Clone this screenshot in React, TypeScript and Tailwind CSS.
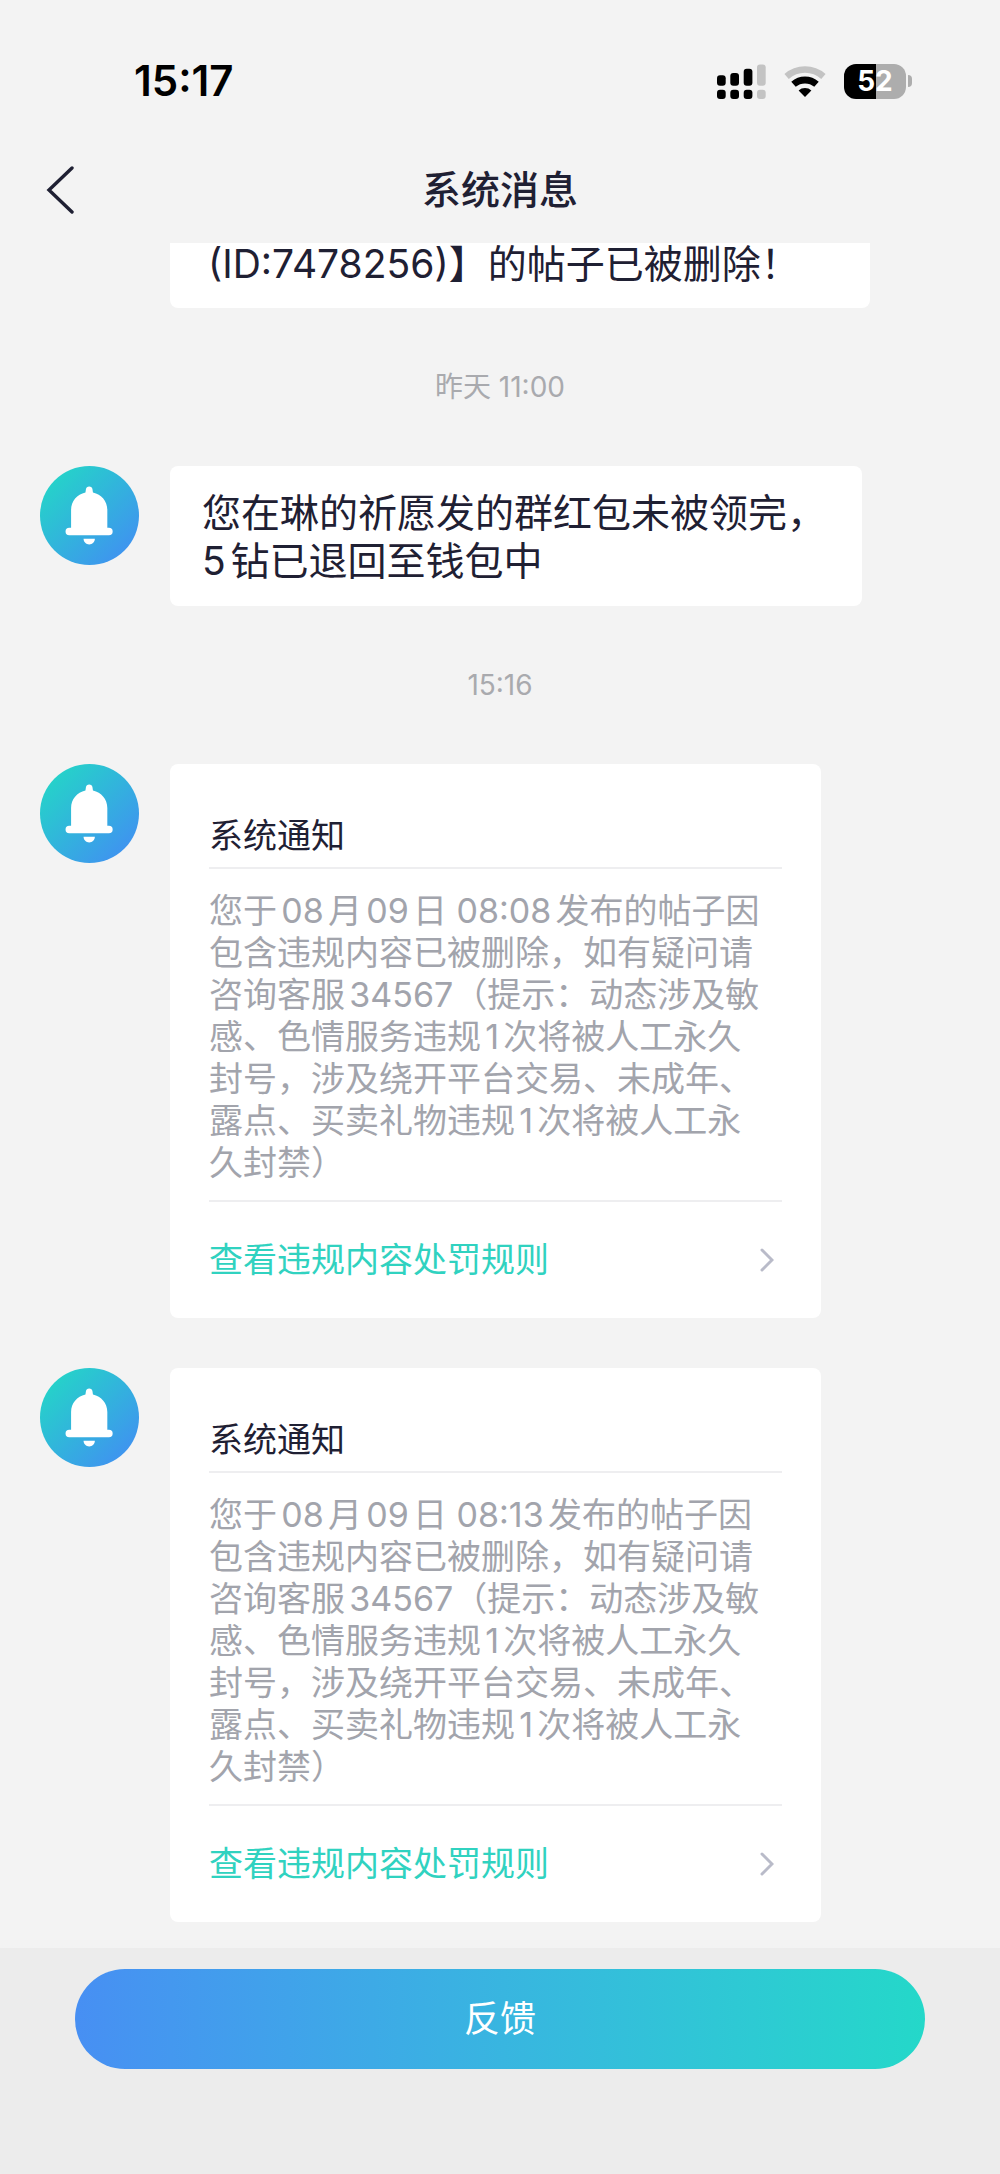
import React from "react";

type Notice = {
  id: number;
  content: string;
};

const notices: Notice[] = [
  {
    id: 1,
    content:
      "您于08月09日 08:08发布的帖子因包含违规内容已被删除，如有疑问请咨询客服34567（提示：动态涉及敏感、色情服务违规1次将被人工永久封号，涉及绕开平台交易、未成年、露点、买卖礼物违规1次将被人工永久封禁）",
  },
  {
    id: 2,
    content:
      "您于08月09日 08:13发布的帖子因包含违规内容已被删除，如有疑问请咨询客服34567（提示：动态涉及敏感、色情服务违规1次将被人工永久封号，涉及绕开平台交易、未成年、露点、买卖礼物违规1次将被人工永久封禁）",
  },
];

function SignalIcon() {
  return (
    <svg width="49" height="35" viewBox="0 0 49 35" aria-hidden="true">
      <g fill="#000">
        <rect x="0" y="11.3" width="8.7" height="10.4" rx="3" />
        <rect x="13.3" y="9" width="8.7" height="12.7" rx="3" />
        <rect x="26.7" y="4.7" width="8.7" height="17" rx="3" />
        <rect x="0" y="25.8" width="8.7" height="9.2" rx="3" />
        <rect x="13.3" y="25.8" width="8.7" height="9.2" rx="3" />
        <rect x="26.7" y="25.8" width="8.7" height="9.2" rx="3" />
      </g>
      <g fill="#c3c3c3">
        <rect x="40" y="0.6" width="8.7" height="21.1" rx="3" />
        <rect x="40" y="25.8" width="8.7" height="9.2" rx="3" />
      </g>
    </svg>
  );
}

function WifiIcon() {
  return (
    <svg width="42" height="33" viewBox="0 0 42 33" aria-hidden="true">
      <path
        d="M2.6 11.4A28 28 0 0 1 39.4 11.4"
        fill="none"
        stroke="#c3c3c3"
        strokeWidth="6.6"
      />
      <path
        d="M9.5 19.3A17.5 17.5 0 0 1 32.5 19.3"
        fill="none"
        stroke="#000"
        strokeWidth="6.8"
      />
      <path d="M21 32L14.6 25.4A9.6 9.6 0 0 1 27.4 25.4Z" fill="#000" />
    </svg>
  );
}

function Battery() {
  return (
    <div className="flex items-center gap-[2px]">
      <div className="flex h-[35px] w-[62px] items-center justify-center rounded-[12px] bg-[linear-gradient(90deg,#000_52%,#adadad_52%)] text-[28px] leading-[35px] font-bold text-white">
        52
      </div>
      <div className="h-3 w-1 rounded-r-full bg-[#adadad]" />
    </div>
  );
}

function Avatar() {
  return (
    <div className="size-[99px] shrink-0 rounded-full bg-[linear-gradient(135deg,#25d3c9_12%,#3f93f0_88%)]">
      <svg viewBox="0 0 100 100" fill="#fff" aria-hidden="true">
        <path d="M45.9 26.8L46.4 23.6Q46.9 20.7 49.7 20.7Q52.5 20.7 53 23.6L53.5 26.8C62 28.6 68 35.6 68 44.5V62.3H69.6A3.8 3.8 0 0 1 69.6 69.9H29.6A3.8 3.8 0 0 1 29.6 62.3H31.4V44.5C31.4 35.6 37.4 28.6 45.9 26.8Z" />
        <path d="M44 73.6H55.4C55.4 77 52.8 79.2 49.7 79.2S44 77 44 73.6Z" />
      </svg>
    </div>
  );
}

function TimeLabel({ children }: { children: React.ReactNode }) {
  return (
    <p className="py-[60px] text-center text-[28px] leading-[38px] text-[#a9aaae]">
      {children}
    </p>
  );
}

function NoticeCard({ content }: { content: string }) {
  return (
    <article className="w-[651px] rounded-lg bg-white px-[39px] pt-[48px]">
      <h2 className="border-b-2 border-[#eeeef0] pb-[7px] text-[34px] leading-[48px]">
        系统通知
      </h2>
      <p className="border-b-2 border-[#eeeef0] pt-[21px] pr-4 pb-4 text-[34px] leading-[42px] text-[#a2a4ac] [text-autospace:normal]">
        {content}
      </p>
      <a
        href="#rules"
        className="flex h-[116px] items-center justify-between pr-2 text-[34px] leading-[48px] text-[#30d2c0]"
      >
        查看违规内容处罚规则
        <svg
          width="14"
          height="24"
          viewBox="0 0 14 24"
          fill="none"
          stroke="#b9bbc9"
          strokeWidth="3"
          strokeLinecap="round"
          aria-hidden="true"
        >
          <path d="M2 2L12 12L2 22" />
        </svg>
      </a>
    </article>
  );
}

function App() {
  return (
    <div
      lang="zh-CN"
      className="flex min-h-screen flex-col bg-[#f3f3f3] font-['Inter','Noto_Sans_CJK_SC',sans-serif] text-[#1f2033]"
    >
      <div className="flex h-[137px] items-center justify-between pt-[25px] pr-[88px] pl-[134px]">
        <span className="text-[42px] leading-[48px] font-semibold text-black">
          15:17
        </span>
        <div className="flex items-center gap-[18px]">
          <SignalIcon />
          <WifiIcon />
          <Battery />
        </div>
      </div>

      <header className="grid h-[106px] grid-cols-[1fr_auto_1fr] items-center px-[46px]">
        <button type="button" aria-label="返回" className="justify-self-start">
          <svg
            width="28"
            height="50"
            viewBox="0 0 28 50"
            fill="none"
            stroke="#1f2033"
            strokeWidth="3.4"
            strokeLinecap="round"
            aria-hidden="true"
          >
            <path d="M26 3L3 25L26 47" />
          </svg>
        </button>
        <h1 className="text-[39px] leading-[48px] font-medium">系统消息</h1>
      </header>

      <main className="flex-1 pb-[26px]">
        {/* tail of a message that is scrolled under the header */}
        <p className="ml-[170px] w-[700px] rounded-b-lg bg-white px-[38px] pt-px pb-6 text-[39px] leading-[40px]">
          (ID:7478256)】的帖子已被删除！
        </p>

        <TimeLabel>昨天 11:00</TimeLabel>

        <div className="flex items-start gap-[31px] px-10">
          <Avatar />
          <p className="w-[692px] rounded-lg bg-white px-8 pt-[23px] pb-[21px] text-[39px] leading-[48px] [text-autospace:normal]">
            您在琳的祈愿发的群红包未被领完，5钻已退回至钱包中
          </p>
        </div>

        <TimeLabel>15:16</TimeLabel>

        <div className="flex flex-col gap-[50px] px-10">
          {notices.map((notice) => (
            <div className="flex items-start gap-[31px]" key={notice.id}>
              <Avatar />
              <NoticeCard content={notice.content} />
            </div>
          ))}
        </div>
      </main>

      <footer className="bg-[#ececec] px-[75px] pt-[21px] pb-[105px]">
        <button
          type="button"
          className="h-[100px] w-full rounded-full bg-linear-to-r from-[#478ff3] to-[#24d8c9] text-[36px] leading-[48px] text-white"
        >
          反馈
        </button>
      </footer>
    </div>
  );
}

export default App;
